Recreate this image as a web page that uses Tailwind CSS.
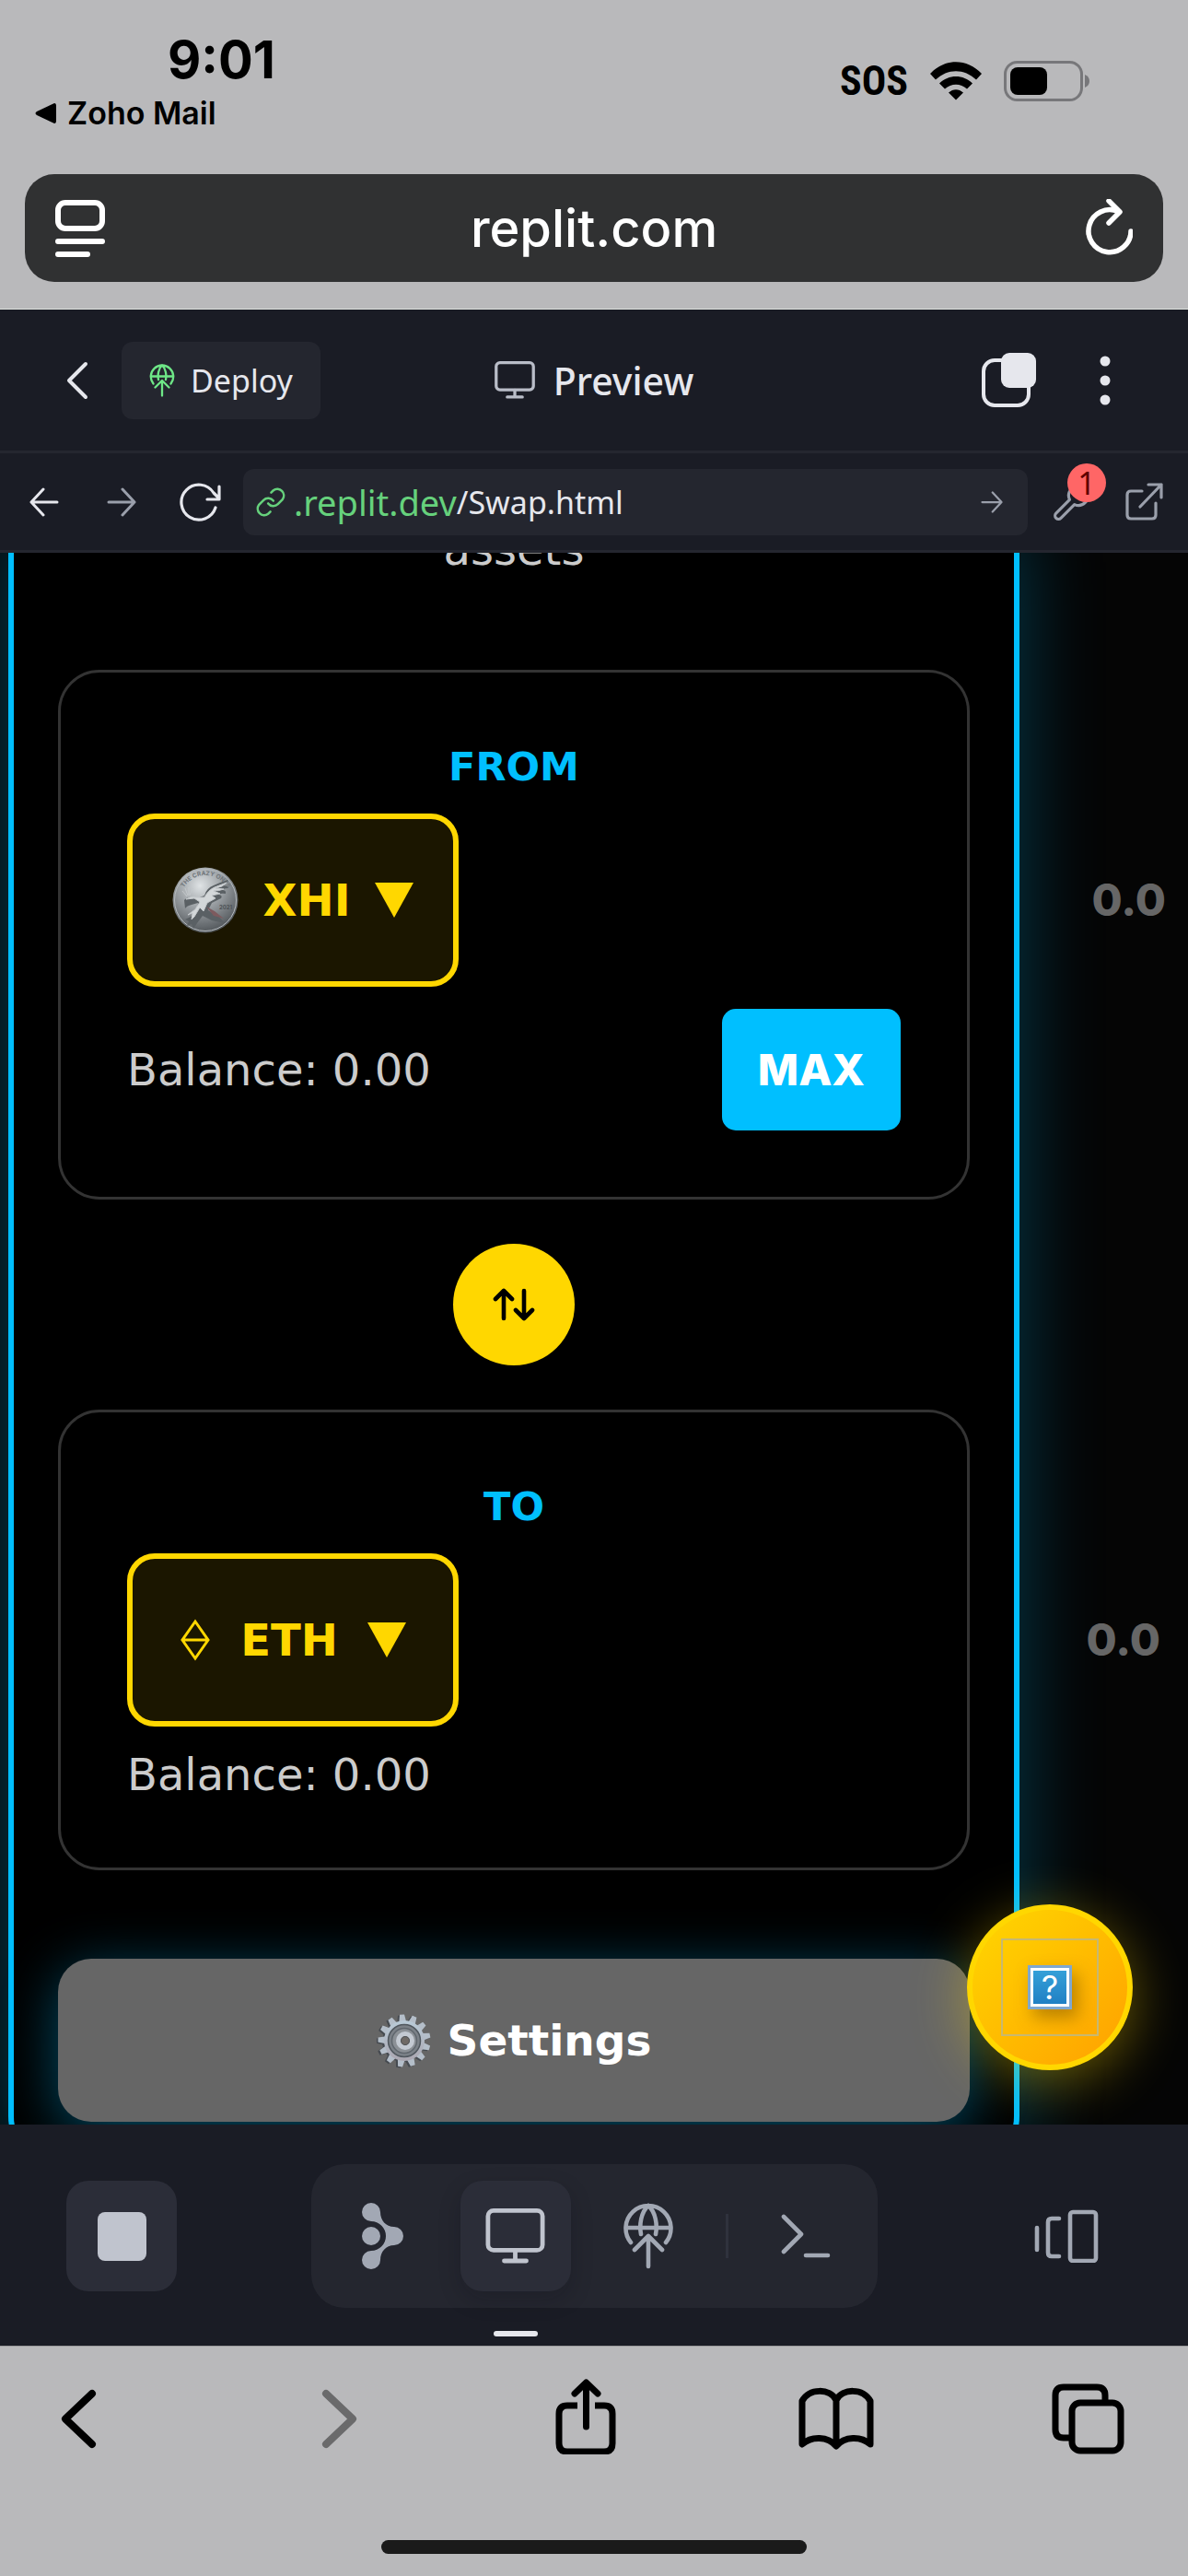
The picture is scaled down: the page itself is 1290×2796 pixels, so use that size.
<!DOCTYPE html>
<html lang="en">
<head>
<meta charset="utf-8">
<meta name="viewport" content="width=device-width, initial-scale=1">
<title>replit.com</title>
<script src="https://cdn.jsdelivr.net/npm/@tailwindcss/browser@4"></script>
</head>
<body class="flex h-screen flex-col overflow-hidden bg-[#b9b9bb] font-[Inter,sans-serif] text-black">

<svg class="hidden" aria-hidden="true">
  <symbol id="deploy" viewBox="0 0 54 72">
    <g fill="none" stroke="currentColor" stroke-width="4.6" stroke-linecap="round" stroke-linejoin="round">
      <path d="M8 43A24.5 24.5 0 1 1 46 43M3 27h48M27 3C19 10 17 24 19 34M27 3c8 7 10 21 8 31M27 69V37M12 51l15-15 15 15"/>
    </g>
  </symbol>
  <symbol id="monitor" viewBox="0 0 64 60">
    <g fill="none" stroke="currentColor" stroke-width="4.8" stroke-linecap="round" stroke-linejoin="round">
      <rect x="2.4" y="2.4" width="59.2" height="43" rx="6"/><path d="M32 46v11M20 57h24"/>
    </g>
  </symbol>
  <symbol id="arrow" viewBox="0 0 32 32">
    <path d="M2 16h28M17 2l13 14-13 14" fill="none" stroke="currentColor" stroke-width="3" stroke-linecap="round" stroke-linejoin="round"/>
  </symbol>
</svg>

<!-- Phone status bar and browser address bar -->
<header class="flex shrink-0 flex-col border-b border-[#dfe3df] px-[27px] pb-[29px]">
  <div class="flex h-[189px] items-start justify-between">
    <div class="pt-[35px]">
      <div class="pl-[155px] text-[56px] leading-[60px] font-bold">9:01</div>
      <a href="#" class="mt-[8px] flex items-center gap-[12px] pl-[11px] text-[34px] leading-[40px] font-semibold">
        <svg class="h-[22px] w-[23px]" viewBox="0 0 23 22"><path d="M21 0Q23 0 23 3V19Q23 22 21 22L2 13Q-1 11 2 9Z"/></svg>
        Zoho Mail
      </a>
    </div>
    <div class="flex items-center gap-[23px] pt-[58px] pr-[79px]">
      <span class="font-['Liberation_Sans_Narrow','Roboto_Condensed',Roboto,sans-serif] text-[44px] leading-[60px] font-bold">SOS</span>
      <svg class="h-[42px] w-[58px]" viewBox="0 0 58 42" aria-label="Wi-Fi">
        <path d="M1 13C17-4 41-4 57 13L51 19.500C38 7 20 7 7 19.500ZM11 23.500C21 13.500 37 13.500 47 23.500L41 29.500C34 23 24 23 17 29.500ZM21 33.500C26 29 32 29 37 33.500L29 41.500Z"/>
      </svg>
      <svg class="h-[44px] w-[94px]" viewBox="0 0 94 44" aria-label="Battery">
        <rect x="1.500" y="1.500" width="83" height="41" rx="13" fill="none" stroke="#77777a" stroke-width="3"/>
        <rect x="7" y="7" width="40" height="30" rx="8"/>
        <path d="M88 15q5 2 5 7t-5 7z" fill="#77777a"/>
      </svg>
    </div>
  </div>
  <div class="flex h-[117px] items-center justify-between rounded-[32px] bg-[#303132] px-[33px] text-white">
    <button aria-label="Page menu"><svg class="h-[62px] w-[54px]" viewBox="0 0 54 62" fill="none" stroke="#fff" stroke-width="6" stroke-linecap="round"><rect x="3" y="3" width="48" height="28" rx="8"/><path d="M3 45h48M3 59h32"/></svg></button>
    <span class="text-[56px] leading-[64px] font-medium">replit.com</span>
    <button aria-label="Reload"><svg class="h-[64px] w-[54px]" viewBox="0 0 54 64" fill="none" stroke="#fff" stroke-width="5.500" stroke-linecap="round" stroke-linejoin="round"><path d="M52 35A23 23 0 1 1 38 13.500M28 2l12 12-12 12"/></svg></button>
  </div>
</header>

<!-- Workspace title bar -->
<nav class="grid h-[156px] shrink-0 grid-cols-[1fr_auto_1fr] items-center border-b-3 border-[#24262f] bg-[#1a1c25] font-['Noto_Sans',sans-serif] text-[#e6e7ed]">
  <div class="flex items-center gap-[36px] pl-[72px]">
    <button aria-label="Back"><svg class="h-[42px] w-[24px]" viewBox="0 0 24 42" fill="none" stroke="currentColor" stroke-width="4" stroke-linecap="round" stroke-linejoin="round"><path d="M21 3L3 21l18 18"/></svg></button>
    <button class="flex h-[84px] items-center gap-[17px] rounded-[12px] bg-[#24262f] px-[30px] text-[34px] leading-[40px]">
      <svg class="h-[36px] w-[28px] text-[#6ee787]"><use href="#deploy"/></svg>Deploy
    </button>
  </div>
  <div class="flex items-center gap-[20px] text-[41px] leading-[48px] font-medium">
    <svg class="h-[41px] w-[44px] text-[#b9bdc8]"><use href="#monitor"/></svg>Preview
  </div>
  <div class="flex items-center justify-end gap-[57px] pr-[72px]">
    <button aria-label="Tabs"><svg class="h-[60px] w-[59px]" viewBox="0 0 59 60"><rect x="2" y="8" width="49" height="49" rx="12" fill="none" stroke="currentColor" stroke-width="4"/><rect x="21" y="0" width="38" height="38" rx="9" fill="currentColor"/></svg></button>
    <button aria-label="More" class="px-[12px]"><svg class="h-[54px] w-[12px]" viewBox="0 0 12 54" fill="currentColor"><circle cx="6" cy="6" r="5.500"/><circle cx="6" cy="27" r="5.500"/><circle cx="6" cy="48" r="5.500"/></svg></button>
  </div>
</nav>

<!-- Preview address row -->
<nav class="flex h-[108px] shrink-0 items-center border-b-3 border-[#24262f] bg-[#1a1c25] pr-[27px] pl-[32px] font-['Noto_Sans',sans-serif] text-[#e6e7ed]">
  <button aria-label="Back"><svg class="h-[32px] w-[32px] rotate-180"><use href="#arrow"/></svg></button>
  <button aria-label="Forward" class="ml-[52px] text-[#9a9fab]"><svg class="h-[32px] w-[32px]"><use href="#arrow"/></svg></button>
  <button aria-label="Reload" class="ml-[47px]"><svg class="h-[42px] w-[45px]" viewBox="0 0 45 42" fill="none" stroke="currentColor" stroke-width="3.200" stroke-linecap="round" stroke-linejoin="round"><path d="M39 27A19 19 0 1 1 37 11l6 6M43 4v14H30"/></svg></button>
  <div class="ml-[24px] flex h-[72px] flex-1 items-center rounded-[12px] bg-[#24262f] pr-[27px] pl-[13px]">
    <svg class="h-[34px] w-[34px] text-[#66d17c]" viewBox="0 0 24 24" fill="none" stroke="currentColor" stroke-width="1.800" stroke-linecap="round"><path d="M10 13a5 5 0 0 0 7.500.5l3.500-3.500a5 5 0 0 0-7-7l-1.700 1.700M14 11a5 5 0 0 0-7.500-.5L3 14a5 5 0 0 0 7 7l1.700-1.700"/></svg>
    <span class="ml-[8px] text-[38px] leading-[48px] text-[#66d17c]">.replit.dev</span>
    <span class="flex-1 text-[34px] leading-[48px]">/Swap.html</span>
    <button aria-label="Go" class="text-[#9a9fab]"><svg class="h-[24px] w-[24px]"><use href="#arrow"/></svg></button>
  </div>
  <button aria-label="Developer tools" class="relative ml-[27px] text-[#9a9fab]">
    <svg class="h-[42px] w-[42px]" viewBox="0 0 24 24" fill="none" stroke="currentColor" stroke-width="1.800" stroke-linejoin="round"><path d="M14.700 6.300a1 1 0 0 0 0 1.400l1.600 1.600a1 1 0 0 0 1.400 0l3.770-3.770a6 6 0 0 1-7.940 7.940l-8.400 8.400a2.120 2.120 0 0 1-3-3l8.400-8.400a6 6 0 0 1 7.940-7.940z"/></svg>
    <span class="absolute -top-[21px] left-[16px] flex size-[42px] items-center justify-center rounded-full bg-[#ff6666] text-[34px] leading-[42px] text-[#5e0000]">1</span>
  </button>
  <button aria-label="Open in new tab" class="ml-[36px] text-[#9a9fab]"><svg class="h-[42px] w-[42px]" viewBox="0 0 42 42" fill="none" stroke="currentColor" stroke-width="3.200" stroke-linecap="round" stroke-linejoin="round"><path d="M19 9H7q-4 0-4 4v22q0 4 4 4h23q4 0 4-4V22M26 2h14v14M40 2L17 26"/></svg></button>
</nav>

<!-- Previewed page, scrolled part of the way down -->
<main class="relative min-h-0 flex-1 overflow-hidden bg-[#050505] font-['DejaVu_Sans',sans-serif]">
  <section class="mr-[183px] ml-[9px] rounded-b-[60px] border-x-6 border-b-6 border-[#00bfff] bg-black px-[48px] pb-[48px] shadow-[0_0_90px_rgba(0,191,255,0.3)]">
    <p class="-mt-[32px] mb-[102px] text-center text-[48px] leading-[57px] text-[#cccccc]">assets</p>

    <div class="rounded-[45px] border-3 border-[#333333] px-[72px] py-[72px]">
      <h2 class="mb-[21px] text-center text-[43px] leading-[60px] font-bold text-[#00bfff]">FROM</h2>
      <div class="flex items-center gap-[24px]">
        <button class="flex h-[188px] w-[360px] shrink-0 items-center justify-center gap-[26px] rounded-[30px] border-6 border-[#ffd700] bg-[#1b1600] text-[48px] leading-[57px] font-bold text-[#ffd700]">
          <svg class="size-[72px] shrink-0" viewBox="0 0 72 72" aria-hidden="true">
            <defs>
              <radialGradient id="silver" cx="0.420" cy="0.280" r="0.800"><stop offset="0" stop-color="#dfe3e5"/><stop offset="0.450" stop-color="#989da1"/><stop offset="1" stop-color="#42474b"/></radialGradient>
              <path id="rim" d="M9 36A27 27 0 0 1 63 36"/>
            </defs>
            <circle cx="36" cy="36" r="35.500" fill="url(#silver)"/>
            <circle cx="36" cy="36" r="33.500" fill="none" stroke="#b5babd" stroke-width="1"/>
            <text font-family="Inter" font-size="6.500" font-weight="700" fill="#70767a"><textPath href="#rim" startOffset="14">THE CRAZY ONES</textPath></text>
            <path d="M13 36q6-6 14-2l8-3q2-8 10-11 9-4 16-6-2 4-7 6 6 0 7 3-5 0-7 2 5 0 4 4-5-1-7 1 4 1 2 4l-10 5-4 8 12 7 6 7-14-3-10-5-6 8-4 6-2-5-5 2 2-5-4-2 8-4 5-6 1-8-7 2q-5 1-7 4z" fill="#5a6064"/>
            <path d="M15 35q5-4 11-2l9 0q4-8 11-11l13-5q-4 5-12 6l9 1q-5 2-11 2l7 3-9 2 4 3-9 5-4 9-4-4-6 10-3 3 1-7-5 2 8-6 5-8-6-4zM11 26l5 6M14 23l3 8M18 22l0 9M22 23l-3 8" fill="#d3d7d9" stroke="#c4c8cb" stroke-width="1"/>
            <path d="M37 43l9 5 10 8-11-3z" fill="#7d5a5e"/>
            <text x="51" y="46" font-family="Inter" font-size="6" fill="#4d5256">2021</text>
          </svg>
          XHI
          <svg class="h-[38px] w-[42px] shrink-0" viewBox="0 0 42 38" fill="currentColor"><path d="M0 0h42L21 38z"/></svg>
        </button>
        <input aria-label="Amount to swap" placeholder="0.0" class="w-full shrink-0 bg-transparent pr-[96px] text-right font-[Inter,sans-serif] text-[48px] leading-[60px] font-extrabold text-white placeholder:text-[#666666] placeholder:opacity-100">
      </div>
      <div class="mt-[24px] flex items-center justify-between">
        <span class="text-[48px] leading-[57px] text-[#cccccc]">Balance: 0.00</span>
        <button class="h-[132px] w-[194px] rounded-[15px] bg-[#00bfff] font-[Inter,sans-serif] text-[47px] leading-[60px] font-extrabold text-white">MAX</button>
      </div>
    </div>

    <button aria-label="Switch tokens" class="mx-auto my-[48px] flex size-[132px] items-center justify-center rounded-full bg-[#ffd700]">
      <svg class="h-[36px] w-[46px]" viewBox="0 0 46 36" fill="none" stroke="#000" stroke-width="4.600" stroke-linecap="round" stroke-linejoin="round"><path d="M12 33V4M3 12l9-9 9 9M34 3v29M25 24l9 9 9-9"/></svg>
    </button>

    <div class="rounded-[45px] border-3 border-[#333333] px-[72px] py-[72px]">
      <h2 class="mb-[21px] text-center text-[43px] leading-[60px] font-bold text-[#00bfff]">TO</h2>
      <div class="flex items-center gap-[24px]">
        <button class="flex h-[188px] w-[360px] shrink-0 items-center justify-center gap-[32px] rounded-[30px] border-6 border-[#ffd700] bg-[#1b1600] text-[48px] leading-[57px] font-bold text-[#ffd700]">
          <svg class="h-[46px] w-[34px]" viewBox="0 0 34 46" fill="none" stroke="currentColor" stroke-width="3"><path d="M17 3L31 23 17 43 3 23zM3 23h28"/></svg>
          ETH
          <svg class="h-[38px] w-[42px]" viewBox="0 0 42 38" fill="currentColor"><path d="M0 0h42L21 38z"/></svg>
        </button>
        <input aria-label="Amount received" placeholder="0.0" class="w-full shrink-0 bg-transparent pr-[102px] text-right font-[Inter,sans-serif] text-[48px] leading-[60px] font-extrabold text-white placeholder:text-[#666666] placeholder:opacity-100">
      </div>
      <div class="mt-[24px] text-[48px] leading-[57px] text-[#cccccc]">Balance: 0.00</div>
    </div>

    <button class="mt-[96px] flex h-[177px] w-full items-center justify-center gap-[17px] rounded-[36px] bg-[#666666] text-[47px] leading-[60px] font-bold text-white shadow-[0_12px_60px_rgba(0,191,255,0.4)]">
      <svg class="size-[60px]" viewBox="0 0 60 60" aria-hidden="true">
        <defs>
          <linearGradient id="steel" x1="0" y1="0" x2="0" y2="1"><stop offset="0" stop-color="#b9cbd8"/><stop offset="1" stop-color="#aaa6b0"/></linearGradient>
          <path id="tooth" d="M26 10L27.500 1.500h5L34 10z"/>
          <g id="teeth"><use href="#tooth" transform="rotate(-5 30 30)"/><use href="#tooth" transform="rotate(23 30 30)"/><use href="#tooth" transform="rotate(50 30 30)"/><use href="#tooth" transform="rotate(78 30 30)"/><use href="#tooth" transform="rotate(106 30 30)"/><use href="#tooth" transform="rotate(133 30 30)"/><use href="#tooth" transform="rotate(161 30 30)"/><use href="#tooth" transform="rotate(189 30 30)"/><use href="#tooth" transform="rotate(217 30 30)"/><use href="#tooth" transform="rotate(244 30 30)"/><use href="#tooth" transform="rotate(272 30 30)"/><use href="#tooth" transform="rotate(300 30 30)"/><use href="#tooth" transform="rotate(327 30 30)"/></g>
        </defs>
        <g fill="#454a50" transform="translate(-2 1)"><use href="#teeth"/><circle cx="30" cy="30" r="22"/></g>
        <g fill="#b4bec9"><use href="#teeth"/></g>
        <circle cx="30" cy="30" r="22" fill="url(#steel)"/>
        <circle cx="30" cy="30" r="17.500" fill="#7b8188" stroke="#50575e" stroke-width="1.500"/>
        <circle cx="30" cy="30" r="13.500" fill="#8b9096" stroke="#5f666d" stroke-width="1.500"/>
        <circle cx="31" cy="30" r="7.500" fill="#7b7673" stroke="#c3c9d2" stroke-width="5"/>
        <circle cx="31" cy="30" r="4.500" fill="#6f6a66" stroke="#4f5358" stroke-width="1"/>
      </svg>
      Settings
    </button>
  </section>

  <!-- Floating help button -->
  <button aria-label="Help" class="absolute right-[60px] bottom-[59px] flex size-[180px] items-center justify-center rounded-full border-6 border-[#ffd700] bg-linear-to-br from-[#ffd700] to-[#ffa000] shadow-[0_12px_60px_rgba(255,215,0,0.4)]">
    <span class="flex size-[106px] items-center justify-center border-2 border-[#c8b870]">
      <span class="flex size-[48px] items-center justify-center border-3 border-[#7fa8d0] bg-white p-[3px] shadow-[6px_9px_18px_rgba(120,80,0,0.5)]">
        <span class="flex size-full items-center justify-center bg-linear-to-b from-[#35a0d8] to-[#2080c4] font-[Inter,sans-serif] text-[36px] leading-[36px] text-white">?</span>
      </span>
    </span>
  </button>
</main>

<!-- Workspace dock -->
<nav class="flex h-[240px] shrink-0 items-start justify-between bg-[#1a1c25] px-[72px] pt-[43px] text-[#a2a8b4]">
  <button aria-label="Stop" class="mt-[18px] flex size-[120px] items-center justify-center rounded-[24px] bg-[#2b2d38]"><span class="size-[53px] rounded-[8px] bg-[#c0c4ce]"></span></button>
  <div class="flex h-[156px] items-center gap-[24px] rounded-[36px] bg-[#24262f] px-[18px]">
    <button aria-label="Agent" class="flex size-[120px] items-center justify-center"><svg class="h-[72px] w-[46px]" viewBox="0 0 46 72" fill="currentColor"><circle cx="10" cy="36" r="10"/><path d="M10 20A10 10 0 1 1 20 10C20 19 26 26 35 26A10 10 0 0 1 35 46C26 46 20 53 20 62A10 10 0 1 1 10 52A16 16 0 0 0 10 20Z"/></svg></button>
    <button aria-label="Preview" class="relative flex size-[120px] items-center justify-center rounded-[24px] bg-[#2b2d38] text-[#c0c4ce] shadow-[0_9px_24px_rgba(10,10,20,0.2)]">
      <svg class="h-[60px] w-[65px]"><use href="#monitor"/></svg>
      <span class="absolute -bottom-[49px] left-1/2 h-[6px] w-[48px] -translate-x-1/2 rounded-[3px] bg-[#e6e7ed]"></span>
    </button>
    <button aria-label="Deployments" class="flex size-[120px] items-center justify-center"><svg class="h-[72px] w-[54px]"><use href="#deploy"/></svg></button>
    <span class="h-[48px] w-[3px] bg-[#2f323d]"></span>
    <button aria-label="Shell" class="flex size-[120px] items-center justify-center"><svg class="h-[48px] w-[54px]" viewBox="0 0 54 48" fill="none" stroke="currentColor" stroke-width="4.600" stroke-linecap="round" stroke-linejoin="round"><path d="M3 3l19 19L3 41M27 45h24"/></svg></button>
  </div>
  <button aria-label="Panels" class="mt-[18px] flex size-[120px] items-center justify-center"><svg class="h-[58px] w-[70px]" viewBox="0 0 70 58" fill="none" stroke="currentColor" stroke-width="4.600" stroke-linecap="round" stroke-linejoin="round"><rect x="39" y="3" width="28" height="53" rx="3"/><path d="M3 20v24M27 10H19q-4 0-4 4v33q0 4 4 4h8"/></svg></button>
</nav>

<!-- Browser toolbar -->
<footer class="flex h-[250px] shrink-0 flex-col items-center justify-between border-t border-[#9a9a9c] pt-[35px] pb-[24px]">
  <div class="flex w-full justify-between pr-[67px] pl-[45px]">
    <button aria-label="Back"><svg class="size-[82px]" viewBox="0 0 82 82" fill="none" stroke="#000" stroke-width="8" stroke-linecap="round" stroke-linejoin="round"><path d="M55 16L26 43.500 55 71"/></svg></button>
    <button aria-label="Forward" disabled><svg class="size-[82px]" viewBox="0 0 82 82" fill="none" stroke="#6a6a6b" stroke-width="8" stroke-linecap="round" stroke-linejoin="round"><path d="M35 16L64 43.500 35 71"/></svg></button>
    <button aria-label="Share"><svg class="size-[82px]" viewBox="0 0 82 82" fill="none" stroke="#000" stroke-width="7" stroke-linecap="round" stroke-linejoin="round"><path d="M34 29H23q-9 0-9 9v32q0 9 9 9h40q9 0 9-9V38q0-9-9-9H53" stroke-linecap="butt"/><path d="M43.500 52V5M31 16L43.500 4 56 16"/></svg></button>
    <button aria-label="Bookmarks"><svg class="size-[82px]" viewBox="0 0 82 82" fill="none" stroke="#000" stroke-width="7" stroke-linecap="round" stroke-linejoin="round"><path d="M41 73C32 62 14 62 4 71V24C12 10 34 10 41 23C48 10 70 10 78 24V71C68 62 50 62 41 73V23"/></svg></button>
    <button aria-label="Tabs"><svg class="size-[82px]" viewBox="0 0 82 82" fill="none" stroke="#000" stroke-width="7"><path d="M59 25V18q0-9-9-9H14q-9 0-9 9v37q0 9 9 9h9"/><rect x="23" y="26" width="53" height="52" rx="9"/></svg></button>
  </div>
  <div class="h-[15px] w-[462px] rounded-full bg-[#1a1a1a]"></div>
</footer>
</body>
</html>
